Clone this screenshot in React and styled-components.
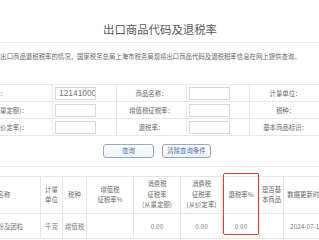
import React from 'react';
import styled, { createGlobalStyle } from 'styled-components';

const GlobalStyle = createGlobalStyle`
  html, body {
    margin: 0;
    padding: 0;
    background: #ffffff;
    overflow: hidden;
  }
  body {
    font-family: "Noto Sans CJK SC", "Liberation Sans", sans-serif;
    color: #666666;
  }
`;

const s = {
  Page: styled.div`
    width: 480px;
    margin-left: -80px;
  `,
  TitleBar: styled.div`
    padding: 22px 0 6px;
    border-bottom: 1px solid #eeeeee;
    text-align: center;
  `,
  Title: styled.h1`
    margin: 0;
    font-size: 11.4px;
    line-height: 14px;
    font-weight: normal;
    color: #5a5a5a;
  `,
  Notice: styled.p`
    margin: 9px 0 0;
    padding-left: 10px;
    font-size: 6.4px;
    line-height: 10px;
    white-space: nowrap;
    color: #666666;
  `,
  FormTable: styled.table`
    margin: 22px 0 0 8px;
    width: 393px;
    table-layout: fixed;
    border-collapse: collapse;
  `,
  FormLabel: styled.td`
    height: 16px;
    padding: 0;
    border: 1px solid #e8e8e8;
    text-align: center;
    font-size: 6.4px;
    white-space: nowrap;
    overflow: hidden;
    color: #666666;
  `,
  FormField: styled.td`
    height: 16px;
    padding: 0 0 0 2px;
    border: 1px solid #e8e8e8;
  `,
  TextInput: styled.input`
    display: block;
    box-sizing: border-box;
    width: 41px;
    height: 13px;
    margin: 0;
    padding: 0 0 0 3px;
    border: 1px solid #d8d8d8;
    font-family: "Liberation Sans", sans-serif;
    font-size: 8.4px;
    color: #777777;
    outline: none;
  `,
  ButtonRow: styled.div`
    display: flex;
    justify-content: center;
    gap: 8px;
    margin-top: 8px;
    padding-right: 6px;
  `,
  Button: styled.button`
    box-sizing: border-box;
    width: ${(p) => p.$w}px;
    height: 14px;
    padding: 0;
    border: 1px solid #94a8c8;
    border-radius: 3px;
    background: linear-gradient(#ffffff, #eef2f7);
    font-family: "Noto Sans CJK SC", sans-serif;
    font-size: 6.4px;
    line-height: 12px;
    color: #4a6fae;
  `,
  Divider: styled.div`
    margin-top: 8px;
    border-top: 1px solid #ebebeb;
  `,
  ResultWrap: styled.div`
    position: relative;
    margin: 9px 0 0 34px;
    width: 375px;
  `,
  ResultTable: styled.table`
    width: 375px;
    table-layout: fixed;
    border-collapse: collapse;
  `,
  HeadCell: styled.th`
    height: 36px;
    padding: 0;
    border: 1px solid #e6e6e6;
    font-size: 6.4px;
    line-height: 10.5px;
    font-weight: normal;
    text-align: center;
    white-space: nowrap;
    overflow: hidden;
    color: #666666;
  `,
  DataCell: styled.td`
    height: 24px;
    padding: 0;
    border: 1px solid #e6e6e6;
    font-size: 6.4px;
    text-align: center;
    white-space: nowrap;
    overflow: hidden;
    color: #777777;
  `,
  Highlight: styled.div`
    position: absolute;
    left: 269px;
    top: -3px;
    width: 36px;
    height: 62px;
    box-sizing: border-box;
    border: 1.5px solid #e23b3b;
    border-radius: 2px;
    pointer-events: none;
  `,
};

const formRows = [
  ['商品代码：', '12141000', '商品名称：', '', '计量单位：'],
  ['消费税征税率(从量定额)：', '', '增值税征税率：', '', '税种：'],
  ['消费税征税率(从价定率)：', '', '退税率：', '', '基本商品标识：'],
];

const formCols = [124, 64, 70, 63, 72];
const resultCols = [86, 22, 24, 47, 47, 42, 37, 24, 46];

const headers = [
  ['商品名称'],
  ['计量', '单位'],
  ['税种'],
  ['增值税', '征税率%'],
  ['消费税', '征税率', '(从量定额)'],
  ['消费税', '征税率', '(从价定率)'],
  ['退税率%'],
  ['是否基', '本商品'],
  ['数据更新时间'],
];

const rowData = ['紫苜蓿粗粉及团粒', '千克', '增值税', '', '0.00', '0.00', '0.00', '', '2024-07-15'];

const App = () => {
  return (
    <>
      <GlobalStyle />
      <s.Page>
        <s.TitleBar>
          <s.Title>出口商品代码及退税率</s.Title>
        </s.TitleBar>
        <s.Notice>
          为了方便纳税人及时了解出口商品退税税率的情况，国家税务总局上海市税务局现将出口商品代码及退税税率信息在网上提供查询。
        </s.Notice>

        <s.FormTable>
          <colgroup>
            {formCols.map((w, i) => (
              <col key={i} style={{ width: w }} />
            ))}
          </colgroup>
          <tbody>
            {formRows.map((r, i) => (
              <tr key={i}>
                <s.FormLabel>{r[0]}</s.FormLabel>
                <s.FormField>
                  <s.TextInput defaultValue={r[1]} />
                </s.FormField>
                <s.FormLabel>{r[2]}</s.FormLabel>
                <s.FormField>
                  <s.TextInput defaultValue={r[3]} />
                </s.FormField>
                <s.FormLabel>{r[4]}</s.FormLabel>
              </tr>
            ))}
          </tbody>
        </s.FormTable>

        <s.ButtonRow>
          <s.Button $w={51}>查询</s.Button>
          <s.Button $w={49}>清除查询条件</s.Button>
        </s.ButtonRow>

        <s.Divider />

        <s.ResultWrap>
          <s.ResultTable>
            <colgroup>
              {resultCols.map((w, i) => (
                <col key={i} style={{ width: w }} />
              ))}
            </colgroup>
            <thead>
              <tr>
                {headers.map((h, i) => (
                  <s.HeadCell key={i}>
                    {h.map((line, j) => (
                      <React.Fragment key={j}>
                        {j > 0 && <br />}
                        {line}
                      </React.Fragment>
                    ))}
                  </s.HeadCell>
                ))}
              </tr>
            </thead>
            <tbody>
              <tr>
                {rowData.map((d, i) => (
                  <s.DataCell key={i}>{d}</s.DataCell>
                ))}
              </tr>
            </tbody>
          </s.ResultTable>
          <s.Highlight />
        </s.ResultWrap>
      </s.Page>
    </>
  );
};

export default App;
